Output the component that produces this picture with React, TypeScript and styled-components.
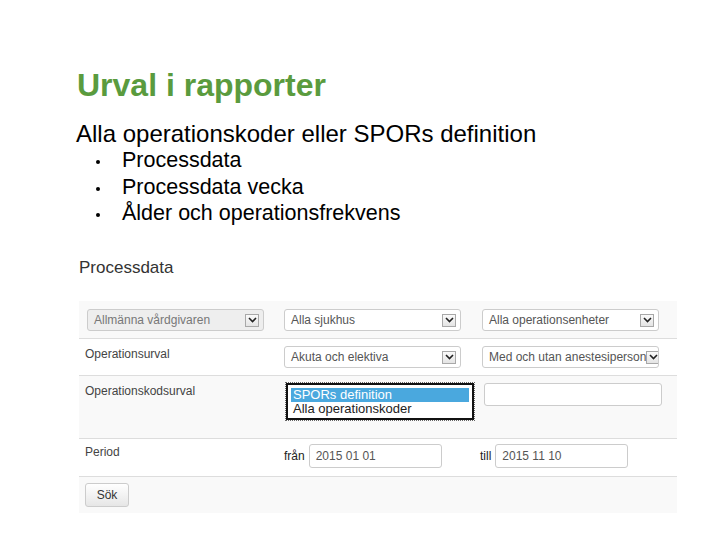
import React from "react";
import styled, { createGlobalStyle } from "styled-components";

const GlobalStyle = createGlobalStyle`
  html, body {
    margin: 0;
    padding: 0;
    background: #ffffff;
    font-family: "Liberation Sans", Arial, sans-serif;
  }
  * {
    box-sizing: border-box;
  }
`;

const Slide = styled.div`
  width: 720px;
  height: 540px;
  padding: 67px 0 0 76px;
  overflow: hidden;
`;

const Title = styled.h1`
  margin: 0 0 0 1px;
  font-size: 32px;
  line-height: 1.15;
  font-weight: bold;
  color: #5a9b3e;
`;

const Subtitle = styled.p`
  margin: 16px 0 0;
  font-size: 24px;
  line-height: 1.15;
  color: #000;
`;

const BulletList = styled.ul`
  list-style: none;
  margin: 0;
  padding: 0 0 0 20px;
`;

const BulletItem = styled.li`
  display: flex;
  align-items: center;
  height: 26.5px;
  font-size: 21.5px;
  line-height: 26.5px;
  color: #000;

  &::before {
    content: "";
    flex: none;
    width: 4px;
    height: 4px;
    margin: 3px 22px 0 0;
    border-radius: 50%;
    background: #000;
  }
`;

/* the embedded screenshot of the report form */
const Panel = styled.div`
  margin: 31px 0 0 3px;
  width: 598px;
`;

const PanelHeading = styled.h2`
  margin: 0 0 24px;
  font-size: 17px;
  line-height: 1.15;
  font-weight: normal;
  color: #333;
`;

const Row = styled.div<{ $shade?: boolean; $h: number; $pt?: number; $first?: boolean }>`
  display: grid;
  grid-template-columns: 197px 198px 203px;
  height: ${(p) => p.$h}px;
  padding-top: ${(p) => p.$pt ?? 7}px;
  background: ${(p) => (p.$shade ? "#f9f9f9" : "#ffffff")};
  border-top: ${(p) => (p.$first ? "none" : "1px solid #dddddd")};
  ${(p) => (p.$first ? "padding-top: 8px;" : "")}
`;

const Cell = styled.div<{ $pl?: number }>`
  display: flex;
  align-items: flex-start;
  gap: 4px;
  padding-left: ${(p) => p.$pl ?? 8}px;
`;

const Label = styled.span<{ $dark?: boolean }>`
  font-size: 12px;
  line-height: 16px;
  color: ${(p) => (p.$dark ? "#222" : "#444")};
`;

const SideLabel = styled(Label)`
  line-height: 24px;
`;

const SelectBox = styled.div<{ $disabled?: boolean; $w?: number }>`
  display: flex;
  align-items: center;
  justify-content: space-between;
  width: ${(p) => p.$w ?? 177}px;
  height: 22px;
  padding: 0 4px 0 6px;
  border: 1px solid #cccccc;
  border-radius: 3px;
  background: ${(p) => (p.$disabled ? "#eeeeee" : "#ffffff")};
  font-size: 12px;
  color: ${(p) => (p.$disabled ? "#777" : "#555")};
  white-space: nowrap;
  overflow: hidden;
`;

const ArrowBox = styled.span`
  flex: none;
  display: flex;
  align-items: center;
  justify-content: center;
  width: 14px;
  height: 13px;
  border: 1px solid #a8a8a8;
  background: linear-gradient(#fafafa, #e4e4e4);
`;

const ListBox = styled.div`
  margin-left: 2px;
  width: 189px;
  height: 37px;
  padding: 3px;
  border: 2px solid #111;
  outline: 1px dotted #666;
  background: #fff;
  font-size: 13px;
  line-height: 14px;
`;

const Option = styled.div<{ $selected?: boolean }>`
  padding-left: 2px;
  background: ${(p) => (p.$selected ? "#4aa8de" : "transparent")};
  color: ${(p) => (p.$selected ? "#fff" : "#222")};
`;

const TextInput = styled.div<{ $w: number; $h?: number }>`
  width: ${(p) => p.$w}px;
  height: ${(p) => p.$h ?? 24}px;
  padding-left: 6px;
  border: 1px solid #cccccc;
  border-radius: 3px;
  background: #fff;
  font-size: 12px;
  line-height: ${(p) => (p.$h ?? 24) - 2}px;
  color: #555;
`;

const Button = styled.div`
  width: 44px;
  height: 24px;
  border: 1px solid #cccccc;
  border-radius: 3px;
  background: linear-gradient(#ffffff, #e6e6e6);
  font-size: 12px;
  line-height: 22px;
  text-align: center;
  color: #333;
`;

const Chevron = () => (
  <svg width="9" height="6" viewBox="0 0 9 6">
    <path d="M1 1 L4.5 4.5 L8 1" fill="none" stroke="#222" strokeWidth="1.6" />
  </svg>
);

const Select: React.FC<{ value: string; disabled?: boolean }> = ({ value, disabled }) => (
  <SelectBox $disabled={disabled}>
    <span>{value}</span>
    <ArrowBox>
      <Chevron />
    </ArrowBox>
  </SelectBox>
);

export default function App() {
  return (
    <>
      <GlobalStyle />
      <Slide>
        <Title>Urval i rapporter</Title>
        <Subtitle>Alla operationskoder eller SPORs definition</Subtitle>
        <BulletList>
          <BulletItem>Processdata</BulletItem>
          <BulletItem>Processdata vecka</BulletItem>
          <BulletItem>Ålder och operationsfrekvens</BulletItem>
        </BulletList>

        <Panel>
          <PanelHeading>Processdata</PanelHeading>

          <Row $shade $first $h={37}>
            <Cell>
              <Select value="Allmänna vårdgivaren" disabled />
            </Cell>
            <Cell>
              <Select value="Alla sjukhus" />
            </Cell>
            <Cell>
              <Select value="Alla operationsenheter" />
            </Cell>
          </Row>

          <Row $h={37}>
            <Cell $pl={6}>
              <Label>Operationsurval</Label>
            </Cell>
            <Cell>
              <Select value="Akuta och elektiva" />
            </Cell>
            <Cell>
              <Select value="Med och utan anestesiperson" />
            </Cell>
          </Row>

          <Row $shade $h={63}>
            <Cell $pl={6}>
              <Label>Operationskodsurval</Label>
            </Cell>
            <Cell>
              <ListBox>
                <Option $selected>SPORs definition</Option>
                <Option>Alla operationskoder</Option>
              </ListBox>
            </Cell>
            <Cell $pl={10}>
              <TextInput $w={178} $h={23} />
            </Cell>
          </Row>

          <Row $h={38} $pt={5}>
            <Cell $pl={6}>
              <Label>Period</Label>
            </Cell>
            <Cell>
              <SideLabel $dark>från</SideLabel>
              <TextInput $w={133}>2015 01 01</TextInput>
            </Cell>
            <Cell $pl={6}>
              <SideLabel $dark>till</SideLabel>
              <TextInput $w={133}>2015 11 10</TextInput>
            </Cell>
          </Row>

          <Row $shade $h={37} $pt={6}>
            <Cell $pl={6}>
              <Button>Sök</Button>
            </Cell>
          </Row>
        </Panel>
      </Slide>
    </>
  );
}
